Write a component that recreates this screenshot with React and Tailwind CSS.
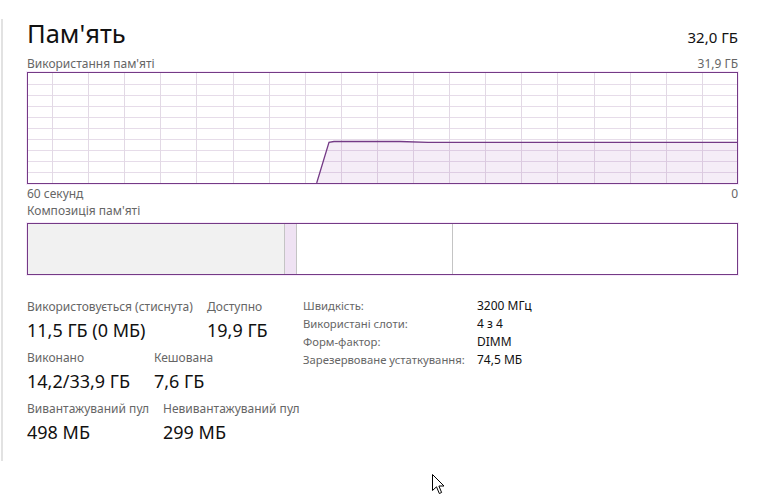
import React from 'react'

const font = { fontFamily: '"Noto Sans", "Open Sans", sans-serif' }

function UsageGraph() {
  const cols = []
  for (let k = 0; k < 19; k++) cols.push(24 + k * 36.1)
  const rows = [11, 22, 33, 44, 55, 66, 77, 88, 99]
  const line = 'M288.7 110 L301 69.3 L306 68.5 L372 68.5 L400 69.3 L709 69.3'
  return (
    <div className="h-[112px] border border-[#743a86] shadow-[0_0_0_1px_#f7e9fa]">
      <svg width="709" height="110" viewBox="0 0 709 110" className="block">
        {rows.map(y => (
          <line key={'r' + y} x1="0" x2="709" y1={y + 0.5} y2={y + 0.5} stroke="#e6dce9" strokeWidth="1" />
        ))}
        {cols.map(x => (
          <line key={'c' + x} x1={Math.round(x) + 0.5} x2={Math.round(x) + 0.5} y1="0" y2="110" stroke="#e2d9e5" strokeWidth="1" />
        ))}
        <path d={line + ' L709 110 Z'} fill="#9a4cb0" fillOpacity="0.1" />
        <path d={line} fill="none" stroke="#743a86" strokeWidth="1.3" />
      </svg>
    </div>
  )
}

function CompositionBar() {
  return (
    <div className="h-[52px] border border-[#743a86] flex shadow-[0_0_0_1px_#f7e9fa]">
      <div className="w-[257px] bg-[#f1f1f1] border-r border-[#c4c4c4]" />
      <div className="w-[12px] bg-[#efe2f3] border-r border-[#c4c4c4]" />
      <div className="w-[156px] border-r border-[#c4c4c4]" />
      <div className="flex-1" />
    </div>
  )
}

function Stat({ label, value, width }) {
  return (
    <div className={width}>
      <div className="h-[16px] leading-[16px] text-[12px] text-[#666] whitespace-nowrap">{label}</div>
      <div className="mt-[3px] h-[24px] leading-[24px] text-[18px] text-[#111] whitespace-nowrap">{value}</div>
    </div>
  )
}

const specs = [
  ['Швидкість:', '3200 МГц'],
  ['Використані слоти:', '4 з 4'],
  ['Форм-фактор:', 'DIMM'],
  ['Зарезервоване устаткування:', '74,5 МБ'],
]

function Cursor() {
  return (
    <svg className="absolute left-[432px] top-[474px]" width="14" height="22" viewBox="0 0 14 22">
      <path d="M0.5 0.5 L0.5 16.5 L4.5 12.8 L7.3 19.5 L9.6 18.5 L6.9 12 L12 12 Z" fill="#fff" stroke="#000" strokeWidth="1" strokeLinejoin="round" />
    </svg>
  )
}

export default function App() {
  return (
    <div className="relative w-[759px] h-[500px] bg-white flex overflow-hidden" style={font}>
      <div className="w-[3px] shrink-0">
        <div className="mt-[19px] h-[442px] border-r-2 border-[#e2e2e2]" />
      </div>
      <div className="ml-[24px] w-[711px] pt-[16px]">
        <div className="h-[34px] flex items-baseline justify-between">
          <div className="text-[25.5px] leading-[34px] text-[#111]">Пам'ять</div>
          <div className="text-[15px] leading-[34px] text-[#111]">32,0 ГБ</div>
        </div>
        <div className="mt-[5px] h-[17px] leading-[17px] flex justify-between text-[12px] text-[#666]">
          <span>Використання пам'яті</span>
          <span>31,9 ГБ</span>
        </div>
        <UsageGraph />
        <div className="mt-[2px] h-[16px] leading-[16px] flex justify-between text-[12px] text-[#666]">
          <span>60 секунд</span>
          <span>0</span>
        </div>
        <div className="mt-[1px] h-[16px] leading-[16px] text-[12px] text-[#666]">Композиція пам'яті</div>
        <div className="mt-[4px]">
          <CompositionBar />
        </div>
        <div className="mt-[22px] flex items-start">
          <div className="pt-[2px] w-[276px] flex flex-col gap-[8px]">
            <div className="flex">
              <Stat width="w-[180px]" label="Використовується (стиснута)" value="11,5 ГБ (0 МБ)" />
              <Stat label="Доступно" value="19,9 ГБ" />
            </div>
            <div className="flex">
              <Stat width="w-[127px]" label="Виконано" value="14,2/33,9 ГБ" />
              <Stat label="Кешована" value="7,6 ГБ" />
            </div>
            <div className="flex">
              <Stat width="w-[136px]" label="Вивантажуваний пул" value="498 МБ" />
              <Stat label="Невивантажуваний пул" value="299 МБ" />
            </div>
          </div>
          <div className="grid grid-cols-[174px_auto] text-[12px] leading-[18px]">
            {specs.map(([k, v]) => (
              <React.Fragment key={k}>
                <div className="text-[11.3px] text-[#666] whitespace-nowrap">{k}</div>
                <div className="text-[#111] whitespace-nowrap">{v}</div>
              </React.Fragment>
            ))}
          </div>
        </div>
      </div>
      <Cursor />
    </div>
  )
}
